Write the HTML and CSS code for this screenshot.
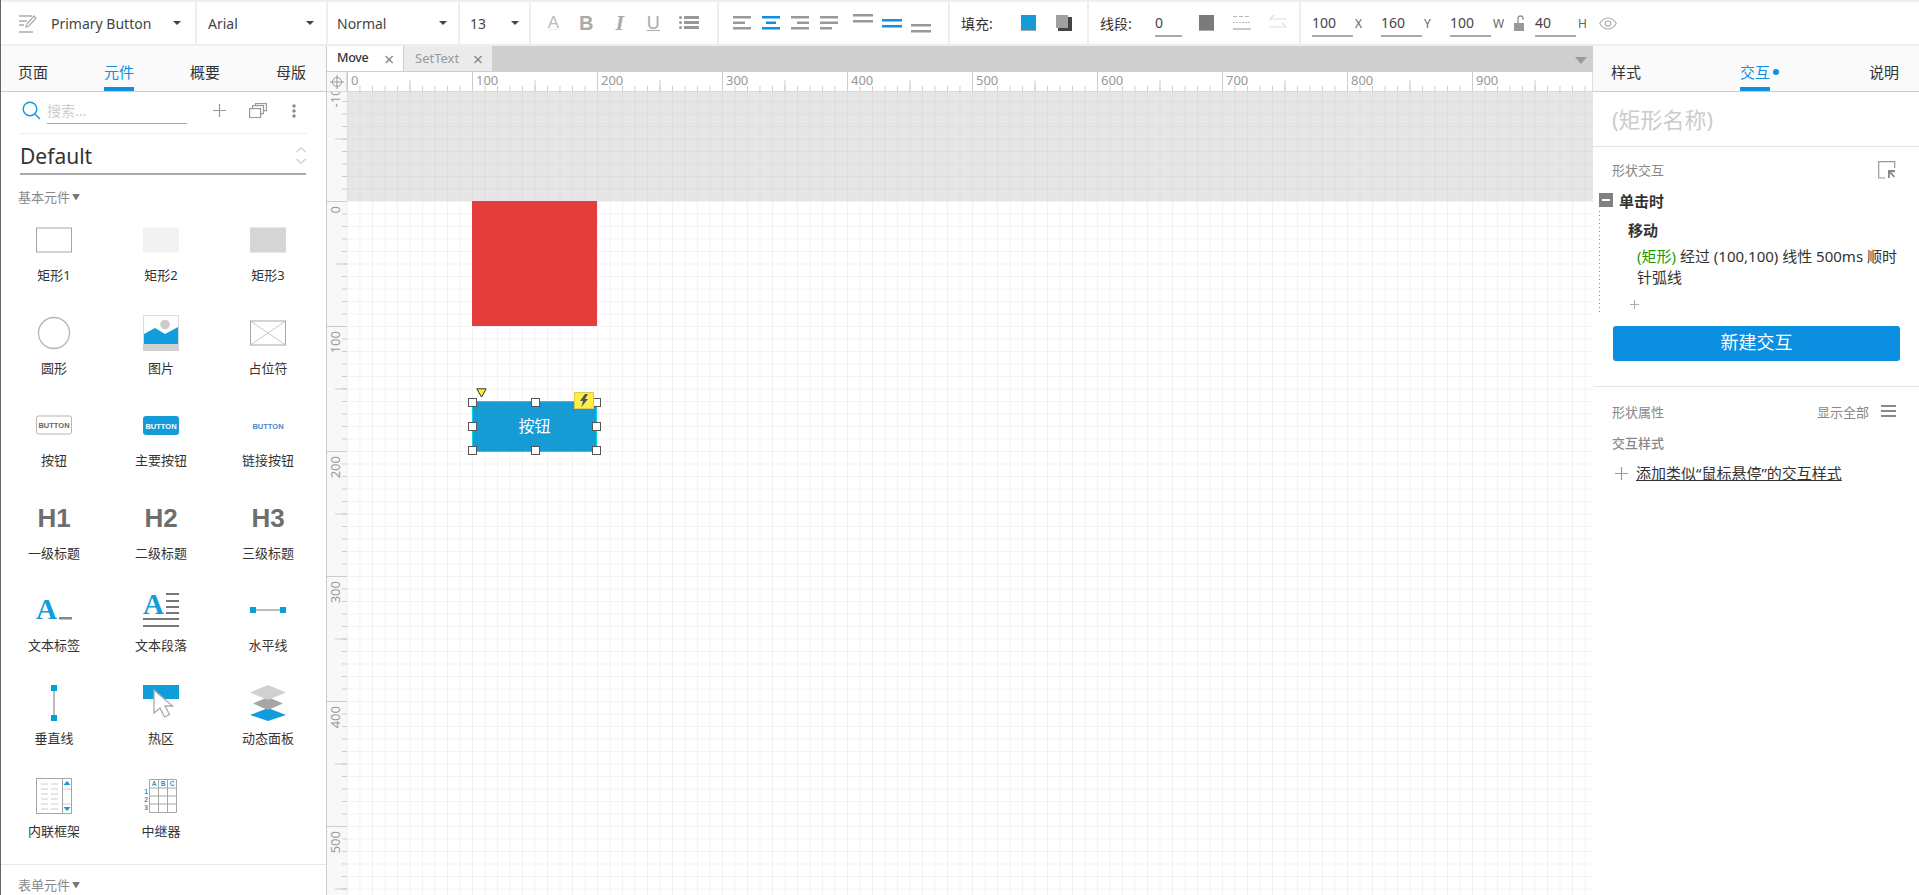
FILE: index.html
```html
<!DOCTYPE html>
<html lang="zh">
<head>
    <meta charset="UTF-8">
    <title>Axure</title>
    <link rel="stylesheet" href="styles.css">
</head>
<body>
    <!-- toolbar -->
    <div class="toolbar">
        <div class="tb-sec sec-style">
            <svg class="ic-style" width="18" height="20" viewBox="0 0 18 20" fill="none" stroke="#aaa" stroke-width="1.5"><path d="M0 3h13M0 8h8M0 12h5M0 19h14"/><path d="M7 14l1-3 7-8 2 2-7 8z" stroke-width="1.2"/></svg>
            <span class="tb-text w-style">Primary Button</span><i class="caret"></i>
        </div>
        <div class="tb-sec sec-font"><span class="tb-text w-font">Arial</span><i class="caret"></i></div>
        <div class="tb-sec sec-weight"><span class="tb-text w-weight">Normal</span><i class="caret"></i></div>
        <div class="tb-sec sec-size"><span class="tb-text w-size">13</span><i class="caret"></i></div>
        <div class="tb-sec sec-format">
            <span class="fmt fmt-a">A</span>
            <span class="fmt fmt-b">B</span>
            <span class="fmt fmt-i">I</span>
            <span class="fmt fmt-u">U</span>
            <svg width="20" height="14" viewBox="0 0 20 14" fill="#999"><rect x="0" y="0" width="3" height="3" rx="1.5"/><rect x="0" y="5" width="3" height="3" rx="1.5"/><rect x="0" y="10" width="3" height="3" rx="1.5"/><rect x="5" y="0" width="15" height="3"/><rect x="5" y="5" width="15" height="3"/><rect x="5" y="10" width="15" height="3"/></svg>
        </div>
        <div class="tb-sec sec-align">
            <svg width="18" height="14" viewBox="0 0 18 14" fill="#999"><rect width="18" height="2.5"/><rect y="5.5" width="12" height="2.5"/><rect y="11" width="18" height="2.5"/></svg>
            <svg width="18" height="14" viewBox="0 0 18 14" fill="#0f8fe0"><rect width="18" height="2.5"/><rect x="4" y="5.5" width="10" height="2.5"/><rect y="11" width="18" height="2.5"/></svg>
            <svg width="18" height="14" viewBox="0 0 18 14" fill="#999"><rect width="18" height="2.5"/><rect x="6" y="5.5" width="12" height="2.5"/><rect y="11" width="18" height="2.5"/></svg>
            <svg width="18" height="14" viewBox="0 0 18 14" fill="#999"><rect width="18" height="2.5"/><rect y="5.5" width="18" height="2.5"/><rect y="11" width="12" height="2.5"/></svg>
            <svg class="va va-top" width="20" height="9" viewBox="0 0 20 9" fill="#999"><rect width="20" height="2.5"/><rect y="6" width="20" height="2.5"/></svg>
            <svg class="va va-mid" width="20" height="9" viewBox="0 0 20 9" fill="#0f8fe0"><rect width="20" height="2.5"/><rect y="6" width="20" height="2.5"/></svg>
            <svg class="va va-bot" width="20" height="9" viewBox="0 0 20 9" fill="#999"><rect width="20" height="2.5"/><rect y="6" width="20" height="2.5"/></svg>
        </div>
        <div class="tb-sec sec-fill">
            <span class="tb-label">填充:</span>
            <span class="swatch swatch-fill"></span>
            <svg width="16" height="16" viewBox="0 0 16 16"><rect x="2" y="2" width="14" height="14" fill="#444"/><rect width="12" height="13" fill="#a0a0a0"/></svg>
        </div>
        <div class="tb-sec sec-line">
            <span class="tb-label">线段:</span>
            <span class="num num-line">0</span>
            <span class="swatch swatch-line"></span>
            <svg class="ic-dash" width="18" height="16" viewBox="0 0 18 16" stroke="#bbb" fill="none"><path d="M0 1.5h18" stroke-dasharray="4 2"/><path d="M0 7.5h18" stroke-dasharray="2 1"/><path d="M0 14h18" stroke-width="1.6"/></svg>
            <svg class="ic-arrows" width="18" height="18" viewBox="0 0 18 18" stroke="#ddd" fill="none" stroke-width="1.2"><path d="M18 5H1l4-4M0 13h17l-4-4"/></svg>
        </div>
        <div class="tb-sec sec-geom">
            <span class="num">100</span><span class="unit u-x">X</span>
            <span class="num">160</span><span class="unit u-x">Y</span>
            <span class="num">100</span><span class="unit u-w">W</span>
            <svg class="ic-lock" width="11" height="16" viewBox="0 0 11 16"><path d="M4 8V3.5a2.5 2.5 0 0 1 5 0V5" fill="none" stroke="#999" stroke-width="1.4"/><rect y="8" width="10" height="8" fill="#999"/></svg>
            <span class="num">40</span><span class="unit u-h">H</span>
            <svg class="ic-eye" width="18" height="13" viewBox="0 0 18 13" fill="none" stroke="#aaa" stroke-width="1.1"><path d="M.7 6.5C3 2.6 6 1 9 1s6 1.6 8.3 5.5C15 10.400 12 12 9 12S3 10.400.7 6.500z"/><circle cx="9" cy="6.500" r="2.800"/></svg>
        </div>
    </div>

    <div class="main">
        <!-- left panel -->
        <div class="left">
            <div class="tabs tabs-left">
                <span class="tab">页面</span>
                <span class="tab active">元件</span>
                <span class="tab">概要</span>
                <span class="tab">母版</span>
            </div>
            <div class="search-row">
                <svg class="ic-search" width="19" height="19" viewBox="0 0 19 19" fill="none" stroke="#1596e0" stroke-width="1.400"><circle cx="8" cy="8" r="6.800"/><path d="M13 13l5 5"/></svg>
                <span class="search-box">搜索...</span>
                <svg class="ic-plus" width="13" height="13" viewBox="0 0 13 13" stroke="#999" stroke-width="1.200"><path d="M6.500 0v13M0 6.500h13"/></svg>
                <svg class="ic-copy" width="18" height="15" viewBox="0 0 18 15" fill="#fff" stroke="#999" stroke-width="1.200"><rect x="6.500" y=".6" width="11" height="7"/><rect x="3.500" y="2.600" width="11" height="8"/><rect x=".6" y="5.600" width="11" height="9"/></svg>
                <svg class="ic-dots" width="4" height="14" viewBox="0 0 4 14" fill="#888"><circle cx="2" cy="2" r="1.700"/><circle cx="2" cy="7" r="1.700"/><circle cx="2" cy="12" r="1.700"/></svg>
            </div>
            <div class="lib-row">
                <span class="lib-name">Default</span>
                <svg width="10" height="17" viewBox="0 0 10 17" fill="none" stroke="#ccc" stroke-width="1.100"><path d="M.5 5L5 .8 9.500 5M.5 12L5 16.200 9.500 12"/></svg>
            </div>
            <div class="group-title">基本元件<span class="tri">▼</span></div>
            <div class="widgets">
                <div class="widget"><svg width="36" height="36" viewBox="0 0 36 36"><rect x=".5" y="6" width="35" height="24" fill="#fff" stroke="#a6a6a6"/></svg><span>矩形1</span></div>
                <div class="widget"><svg width="36" height="36" viewBox="0 0 36 36"><rect y="5.500" width="36" height="25" fill="#f2f2f2"/></svg><span>矩形2</span></div>
                <div class="widget"><svg width="36" height="36" viewBox="0 0 36 36"><rect y="5.500" width="36" height="25" fill="#d6d6d6"/></svg><span>矩形3</span></div>

                <div class="widget"><svg width="36" height="36" viewBox="0 0 36 36"><circle cx="18" cy="18" r="15.500" fill="#fff" stroke="#b5b5b5" stroke-width="1.300"/></svg><span>圆形</span></div>
                <div class="widget"><svg width="36" height="36" viewBox="0 0 36 36"><rect x=".5" y=".5" width="35" height="35" fill="#fff" stroke="#ddd"/><circle cx="22" cy="9.500" r="4.800" fill="#ccc"/><path d="M1 19l11-6 10 6 13-7v17H1z" fill="#0f9ddb"/><rect x="0" y="29" width="36" height="7" fill="#d0d0d0"/></svg><span>图片</span></div>
                <div class="widget"><svg width="36" height="36" viewBox="0 0 36 36" fill="none" stroke="#b0b0b0"><rect x=".5" y="6" width="35" height="24" fill="#fff" stroke="#a6a6a6"/><path d="M1 6.500l34 23M35 6.500L1 29.500" stroke="#c8c8c8"/></svg><span>占位符</span></div>

                <div class="widget"><svg width="36" height="36" viewBox="0 0 36 36"><rect x=".5" y="9" width="35" height="18" rx="2" fill="#fff" stroke="#b5b5b5"/><text class="btn-ic" x="18" y="21" fill="#666">BUTTON</text></svg><span>按钮</span></div>
                <div class="widget"><svg width="36" height="36" viewBox="0 0 36 36"><rect y="9" width="36" height="19" rx="3" fill="#169bd9"/><text class="btn-ic" x="18" y="22" fill="#fff">BUTTON</text></svg><span>主要按钮</span></div>
                <div class="widget"><svg width="36" height="36" viewBox="0 0 36 36"><text class="btn-ic" x="18" y="21.500" fill="#4a86c8">BUTTON</text></svg><span>链接按钮</span></div>

                <div class="widget"><div class="hx">H1</div><span>一级标题</span></div>
                <div class="widget"><div class="hx">H2</div><span>二级标题</span></div>
                <div class="widget"><div class="hx">H3</div><span>三级标题</span></div>

                <div class="widget"><svg width="36" height="36" viewBox="0 0 36 36"><text class="a-ic" x="0" y="27" fill="#0f9ddb">A</text><rect x="23" y="25" width="13" height="2.500" fill="#888"/></svg><span>文本标签</span></div>
                <div class="widget"><svg width="36" height="36" viewBox="0 0 36 36" fill="#777"><text class="a-ic" x="0" y="22" fill="#0f9ddb">A</text><rect x="23" y="1" width="13" height="2"/><rect x="23" y="8" width="13" height="2"/><rect x="23" y="14" width="13" height="2"/><rect x="23" y="20" width="13" height="2"/><rect y="26" width="36" height="2"/><rect y="33" width="36" height="2"/></svg><span>文本段落</span></div>
                <div class="widget"><svg width="36" height="36" viewBox="0 0 36 36"><rect x="3" y="17" width="30" height="2" fill="#bbb"/><rect y="15" width="6" height="6" fill="#00a0e0"/><rect x="30" y="15" width="6" height="6" fill="#00a0e0"/></svg><span>水平线</span></div>

                <div class="widget"><svg width="36" height="36" viewBox="0 0 36 36"><rect x="17" y="3" width="2" height="30" fill="#bbb"/><rect x="15" width="6" height="6" fill="#00a0e0"/><rect x="15" y="30" width="6" height="6" fill="#00a0e0"/></svg><span>垂直线</span></div>
                <div class="widget"><svg width="36" height="36" viewBox="0 0 36 36"><rect width="36" height="14" fill="#0f9ddb"/><path d="M11 5v23l6-5 4.500 9 5-2.500-4.500-8.500h7.500z" fill="#fff" stroke="#aaa" stroke-width="1.300"/></svg><span>热区</span></div>
                <div class="widget"><svg width="36" height="36" viewBox="0 0 36 36"><path d="M18 23l18 7-18 6-18-6z" fill="#0f9ddb"/><path d="M18 12l15 6.500-15 6.500-15-6.500z" fill="#a6a6a6"/><path d="M18 0l18 7.500-18 7.500-18-7.500z" fill="#d0d0d0"/></svg><span>动态面板</span></div>

                <div class="widget"><svg width="36" height="36" viewBox="0 0 36 36" fill="none"><rect x=".5" y=".5" width="35" height="35" fill="#fff" stroke="#a6a6a6"/><path d="M26.500 1v34" stroke="#a6a6a6"/><path d="M27 11h8M27 26h8" stroke="#ccc"/><path d="M31 3l3.500 4h-7z" fill="#0f9ddb"/><path d="M31 33l3.500-4h-7z" fill="#0f9ddb"/><path d="M5 6h7M15 6h7M5 11h7M15 11h7M5 16h7M15 16h7M5 21h7M15 21h7M5 26h7M15 26h7M5 31h7M15 31h7" stroke="#ccc"/></svg><span>内联框架</span></div>
                <div class="widget"><svg width="36" height="36" viewBox="0 0 36 36" fill="none"><path d="M6.500 1.500h27v33h-27zM6.500 10h27M6.500 18h27M6.500 26h27M15.500 1.500v33M24.500 1.500v33" stroke="#a6a6a6"/><text class="rep-ic" x="11" y="8" fill="#0f9ddb">A</text><text class="rep-ic" x="20" y="8" fill="#0f9ddb">B</text><text class="rep-ic" x="29" y="8" fill="#0f9ddb">C</text><text class="rep-ic" x="3" y="16" fill="#0f9ddb">1</text><text class="rep-ic" x="3" y="24" fill="#0f9ddb">2</text><text class="rep-ic" x="3" y="32" fill="#0f9ddb">3</text></svg><span>中继器</span></div>
            </div>
            <div class="group-title group-form">表单元件<span class="tri">▼</span></div>
        </div>

        <!-- center -->
        <div class="center">
            <div class="page-tabs">
                <div class="page-tab current">Move<span class="x">×</span></div>
                <div class="page-tab">SetText<span class="x">×</span></div>
                <span class="tabs-menu"></span>
            </div>
            <div class="ruler-top">
                <div class="corner">
                    <svg width="14" height="14" viewBox="0 0 14 14" fill="none" stroke="#999"><circle cx="7" cy="7" r="4.500"/><path d="M7 0v14M0 7h14"/></svg>
                </div>
                <div class="hruler">
                    <span>0</span><span>100</span><span>200</span><span>300</span><span>400</span><span>500</span><span>600</span><span>700</span><span>800</span><span>900</span><span></span>
                </div>
            </div>
            <div class="work">
                <div class="vruler">
                    <div class="vcell"><span>-100</span></div>
                    <div class="vcell"><span>0</span></div>
                    <div class="vcell"><span>100</span></div>
                    <div class="vcell"><span>200</span></div>
                    <div class="vcell"><span>300</span></div>
                    <div class="vcell"><span>400</span></div>
                    <div class="vcell"><span>500</span></div>
                    <div class="vcell"><span></span></div>
                </div>
                <div class="canvas">
                    <div class="band"></div>
                    <div class="shape-red"></div>
                    <div class="shape-btn">按钮</div>
                    <i class="handle h-tl"></i><i class="handle h-tc"></i><i class="handle h-tr"></i>
                    <i class="handle h-ml"></i><i class="handle h-mr"></i>
                    <i class="handle h-bl"></i><i class="handle h-bc"></i><i class="handle h-br"></i>
                    <svg class="marker" width="11" height="10" viewBox="0 0 11 10"><path d="M.8.8h9.400L5.500 9z" fill="#ffe93b" stroke="#333"/></svg>
                    <div class="bolt"><svg width="9" height="13" viewBox="0 0 9 13"><path d="M5 0L0 7h3l-1.500 6L8 5H5l3-5z" fill="#555"/></svg></div>
                </div>
            </div>
        </div>

        <!-- right panel -->
        <div class="right">
            <div class="tabs tabs-right">
                <span class="tab">样式</span>
                <span class="tab active dot">交互</span>
                <span class="tab">说明</span>
            </div>
            <div class="shape-name">(矩形名称)</div>
            <div class="interactions">
                <div class="sec-head">
                    <span>形状交互</span>
                    <svg width="18" height="18" viewBox="0 0 18 18" fill="none"><path d="M7 17H.7V.7h16V7" stroke="#999" stroke-width="1.200"/><path d="M10 9v8h1.800v-4.500l4 4 1.200-1.200-4-4H17V9z" fill="#888"/></svg>
                </div>
                <div class="event"><span class="minus"></span>单击时</div>
                <div class="tree">
                    <div class="action">移动</div>
                    <div class="desc"><span class="green">(矩形)</span> 经过 (100,100) 线性 500ms 顺时针弧线</div>
                    <svg class="tree-plus" width="9" height="9" viewBox="0 0 9 9" stroke="#aaa"><path d="M4.500 0v9M0 4.500h9"/></svg>
                </div>
                <div class="new-btn">新建交互</div>
            </div>
            <div class="props">
                <div class="sec-head head-props">
                    <span>形状属性</span>
                    <span class="show-all">显示全部</span>
                    <svg width="15" height="12" viewBox="0 0 15 12" fill="#888"><rect width="15" height="2"/><rect y="5" width="15" height="2"/><rect y="10" width="15" height="2"/></svg>
                </div>
                <div class="sub-title">交互样式</div>
                <div class="add-style">
                    <svg width="13" height="13" viewBox="0 0 13 13" stroke="#999" stroke-width="1.200"><path d="M6.500 0v13M0 6.500h13"/></svg>
                    <span class="link">添加类似“鼠标悬停”的交互样式</span>
                </div>
            </div>
        </div>
    </div>
</body>
</html>
```

FILE: styles.css
```css
*{
    box-sizing: border-box;
}
html,body{
    margin: 0;
    height: 895px;
    overflow: hidden;
}
body{
    font-family: "Noto Sans", "Noto Sans CJK SC", sans-serif;
    font-size: 13px;
    color: #333;
    background: #fff;
    border-left: 1px solid #666;
}

/* toolbar */
.toolbar{
    display: flex;
    height: 46px;
    border-top: 2px solid #eee;
    border-bottom: 2px solid #eee;
}
.tb-sec{
    display: flex;
    align-items: center;
    height: 42px;
    border-right: 2px solid #eee;
}
.sec-style{ width: 196px; padding-left: 18px; }
.sec-font{ width: 131px; padding-left: 11px; }
.sec-weight{ width: 132px; padding-left: 9px; }
.sec-size{ width: 71px; padding-left: 10px; }
.sec-format{ width: 188px; padding-left: 16px; }
.sec-align{ width: 231px; padding-left: 14px; gap: 11px; }
.sec-fill{ width: 139px; padding-left: 11px; }
.sec-line{ width: 212px; padding-left: 11px; }
.sec-geom{ border-right: 0; padding-left: 11px; }

.tb-text{
    font-size: 14px;
    color: #444;
}
.w-style{ width: 122px; margin-left: 14px; }
.w-font{ width: 98px; }
.w-weight{ width: 102px; }
.w-size{ width: 41px; }
.caret{
    width: 0;
    height: 0;
    border-left: 4px solid transparent;
    border-right: 4px solid transparent;
    border-top: 4px solid #444;
}
.fmt{
    width: 34.500px;
    font-family: "Liberation Sans", sans-serif;
    font-size: 17px;
    color: #aaa;
    text-align: center;
    margin-left: -1px;
}
.fmt-a{
    font-size: 17px;
    font-weight: normal;
    color: #bbb;
    text-decoration: underline;
    text-decoration-color: #eee;
    margin-left: -1px;
    width: 15px;
    margin-right: 9px;
}
.fmt-b{ font-weight: bold; font-size: 20px; }
.fmt-i{ font-style: italic; font-weight: bold; font-family: "Liberation Serif", serif; font-size: 22px; }
.fmt-u{ text-decoration: underline; font-size: 18px; margin-right: 8px; }
.va{ align-self: center; }
.va-top{ margin: -9px 0 0 4px; }
.va-mid{ margin: 1px 0 0 -2px; }
.va-bot{ margin: 11px 0 0 -2px; }
.tb-label{
    font-size: 14px;
    color: #333;
    width: 36px;
}
.swatch{
    width: 15px;
    height: 16px;
    margin: 0 20px 0 24px;
    border-bottom: 1px solid #aaa;
}
.swatch-fill{ background: #169bd9; }
.swatch-line{ background: #7a7a7a; margin: 0 19px 0 17px; }
.ic-arrows{ margin-left: 18px; }
.num{
    width: 41px;
    height: 26px;
    line-height: 24px;
    font-size: 14px;
    color: #444;
    border-bottom: 2px solid #aaa;
    padding-left: 0;
    margin-top: 1px;
}
.num-line{ width: 27px; margin-left: 19px; }
.unit{
    font-size: 12px;
    color: #666;
    margin-left: 2px;
}
.u-x{ width: 26px; }
.u-w{ width: 21px; }
.u-h{ width: 21px; }
.ic-lock{ margin-right: 10px; }
.ic-eye{ margin-left: 0; }

.main{
    display: flex;
    height: 849px;
}

/* left panel */
.left{
    width: 326px;
    flex: none;
    border-right: 1px solid #ccc;
    overflow: hidden;
}
.tabs{
    display: flex;
    height: 46px;
    background: #fafafa;
    border-bottom: 1px solid #ccc;
}
.tabs-left{
    padding-left: 17px;
    gap: 56px;
}
.tab{
    width: 30px;
    height: 45px;
    padding-top: 16px;
    line-height: 20px;
    font-size: 15px;
    white-space: nowrap;
}
.tab.active{
    color: #0f8fe0;
    border-bottom: 4px solid #0f8fe0;
}
.search-row{
    display: flex;
    align-items: center;
    height: 42px;
    margin: 0 19px;
    border-bottom: 1px solid #eee;
}
.ic-search{ margin: -4px 0 0 2px; flex: none; }
.search-box{
    width: 140px;
    height: 22px;
    margin: 0 0 0 6px;
    border-bottom: 1px solid #aaa;
    color: #ccc;
    font-size: 14px;
    line-height: 18px;
}
.ic-plus{ margin: -4px 0 0 26px; }
.ic-copy{ margin: -4px 0 0 23px; }
.ic-dots{ margin: -4px 0 0 25px; }
.lib-row{
    display: flex;
    align-items: center;
    justify-content: space-between;
    width: 286px;
    height: 41px;
    margin-left: 19px;
    padding-top: 4px;
    border-bottom: 2px solid #aaa;
}
.lib-name{
    font-size: 21px;
    color: #333;
    line-height: 28px;
}
.group-title{
    margin: 13px 0 0 17px;
    font-size: 13px;
    line-height: 18px;
    color: #888;
}
.tri{
    font-size: 8px;
    vertical-align: 2px;
    margin-left: 2px;
    color: #777;
}
.widgets{
    display: grid;
    grid-template-columns: 106px 108px 106px;
    grid-auto-rows: 92.600px;
    height: 643px;
    margin-top: 16px;
    border-bottom: 1px solid #e8e8e8;
}
.widget{
    display: flex;
    flex-direction: column;
    align-items: center;
}
.widget svg,.hx{
    width: 36px;
    height: 36px;
    flex: none;
    overflow: visible;
}
.widget span{
    margin-top: 7px;
    line-height: 20px;
    font-size: 13px;
    white-space: nowrap;
}
.hx{
    font-family: "Liberation Sans", sans-serif;
    font-size: 26px;
    font-weight: bold;
    color: #6e6e6e;
    line-height: 36px;
    text-align: center;
}
.btn-ic{
    font-family: "Liberation Sans", sans-serif;
    font-size: 7.500px;
    font-weight: bold;
    text-anchor: middle;
}
.a-ic{
    font-family: "Liberation Serif", serif;
    font-size: 29px;
    font-weight: bold;
}
.rep-ic{
    font-family: "Liberation Sans", sans-serif;
    font-size: 6.500px;
    font-weight: bold;
    text-anchor: middle;
}
.group-form{
    margin-top: 11px;
}

/* center */
.center{
    width: 1266px;
    flex: none;
    overflow: hidden;
}
.page-tabs{
    position: relative;
    display: flex;
    height: 26px;
    background: #cfcfcf;
}
.page-tab{
    display: flex;
    justify-content: space-between;
    width: 88px;
    height: 25px;
    padding: 0 9px 0 11px;
    background: #ebebeb;
    color: #999;
    font-size: 13px;
    line-height: 24px;
    margin-left: 1px;
}
.page-tab.current{
    width: 76px;
    margin-left: 0;
    padding-left: 10px;
    background: #fff;
    color: #333;
    font-weight: 500;
    font-size: 12.500px;
    letter-spacing: -0.3px;
}
.x{
    font-size: 18px;
    font-weight: normal;
    color: #888;
    line-height: 26px;
}
.tabs-menu{
    position: absolute;
    right: 6px;
    top: 11px;
    border-left: 6px solid transparent;
    border-right: 6px solid transparent;
    border-top: 7px solid #999;
}
.ruler-top{
    display: flex;
    height: 20px;
    border-bottom: 1px solid #d8d8d8;
}
.corner{
    display: flex;
    align-items: center;
    justify-content: center;
    width: 20px;
    flex: none;
    background: #f8f8f8;
    border-right: 1px solid #ddd;
}
.hruler{
    display: flex;
    flex: 1;
    overflow: hidden;
    background:
        linear-gradient(to right, #ccc 1px, transparent 1px) 0 0 / 125px 100% repeat-x,
        linear-gradient(to right, #ccc 1px, transparent 1px) 0 100% / 62.500px 11px repeat-x,
        linear-gradient(to right, #ccc 1px, transparent 1px) 0 100% / 12.500px 5px repeat-x,
        #fff;
}
.hruler span{
    width: 125px;
    flex: none;
    padding-left: 4px;
    font-size: 13px;
    line-height: 17px;
    color: #999;
}
.work{
    display: flex;
    height: 803px;
}
.vruler{
    width: 20px;
    flex: none;
    overflow: hidden;
    background: #f8f8f8;
}
.vcell{
    height: 125px;
    padding-top: 5px;
    background:
        linear-gradient(#ccc 1px, transparent 1px) 0 0 / 100% 125px no-repeat,
        linear-gradient(#ccc 1px, transparent 1px) 100% 0 / 12px 62.500px repeat-y,
        linear-gradient(#ccc 1px, transparent 1px) 100% 0 / 5px 12.500px repeat-y;
}
.vcell:first-child{
    margin-top: -16px;
}
.vcell span{
    display: block;
    writing-mode: vertical-rl;
    transform: rotate(180deg);
    width: 17px;
    font-size: 13px;
    line-height: 17px;
    color: #999;
    text-align: left;
}
.canvas{
    position: relative;
    flex: 1;
    overflow: hidden;
    background:
        linear-gradient(to right, #f2f2f2 1px, transparent 1px) 0 0 / 12.500px 12.500px,
        linear-gradient(#f2f2f2 1px, transparent 1px) 0 9px / 12.500px 12.500px,
        #fff;
}
.band{
    height: 109px;
    background:
        linear-gradient(to right, #dedede 1px, transparent 1px) 0 0 / 12.500px 12.500px,
        linear-gradient(#dedede 1px, transparent 1px) 0 9px / 12.500px 12.500px,
        #e6e6e6;
}
.shape-red{
    position: absolute;
    left: 125px;
    top: 109px;
    width: 125px;
    height: 125px;
    background: #e33e3c;
}
.shape-btn{
    position: absolute;
    left: 125px;
    top: 309px;
    width: 125px;
    height: 51px;
    background: #169bd5;
    border: 1px solid #00d9e0;
    color: #fff;
    font-size: 16px;
    line-height: 48px;
    text-align: center;
}
.handle{
    position: absolute;
    width: 9px;
    height: 9px;
    background: #fff;
    border: 1px solid #555;
    margin: -4px 0 0 -4px;
}
.h-tl{ left: 125px; top: 310px; }
.h-tc{ left: 188px; top: 310px; }
.h-tr{ left: 249px; top: 310px; }
.h-ml{ left: 125px; top: 334px; }
.h-mr{ left: 249px; top: 334px; }
.h-bl{ left: 125px; top: 358px; }
.h-bc{ left: 188px; top: 358px; }
.h-br{ left: 249px; top: 358px; }
.marker{
    position: absolute;
    left: 129px;
    top: 296px;
}
.bolt{
    position: absolute;
    left: 227px;
    top: 300px;
    display: flex;
    align-items: center;
    justify-content: center;
    width: 20px;
    height: 17px;
    background: #ffee44;
    border: 1px solid #d8cc55;
}

/* right panel */
.right{
    width: 327px;
    flex: none;
    border-left: 1px solid #ddd;
    margin-left: -1px;
}
.tabs-right{
    padding-left: 18px;
    gap: 99px;
}
.dot{
    position: relative;
}
.dot::after{
    content: "";
    position: absolute;
    left: 33px;
    top: 23px;
    width: 6px;
    height: 6px;
    border-radius: 50%;
    background: #0f8fe0;
}
.shape-name{
    height: 55px;
    padding: 10px 0 0 19px;
    font-size: 22px;
    line-height: 34px;
    color: #ccc;
    border-bottom: 1px solid #e5e5e5;
}
.interactions{
    height: 240px;
    padding: 0 19px 0 20px;
    border-bottom: 1px solid #e5e5e5;
}
.sec-head{
    display: flex;
    align-items: center;
    height: 43px;
    margin-left: -1px;
    padding-right: 4px;
    padding-top: 2px;
    justify-content: space-between;
    color: #888;
    font-size: 13px;
}
.event{
    display: flex;
    align-items: center;
    height: 20px;
    margin-left: -14px;
    font-size: 15px;
    font-weight: bold;
}
.minus{
    position: relative;
    width: 14px;
    height: 14px;
    margin-right: 6px;
    background: #808080;
}
.minus::after{
    content: "";
    position: absolute;
    left: 3px;
    top: 6px;
    width: 8px;
    height: 2px;
    background: #fff;
}
.tree{
    height: 102px;
    margin-left: -14px;
    padding: 10px 0 0 29px;
    background: linear-gradient(#888 1px, transparent 1px) 0 1px / 1px 4px repeat-y;
}
.action{
    font-size: 15px;
    font-weight: bold;
    line-height: 20px;
}
.desc{
    width: 265px;
    margin: 6px 0 0 9px;
    font-size: 15px;
    line-height: 21px;
}
.green{
    color: #1d9a00;
}
.tree-plus{
    display: block;
    margin: 12px 0 0 2px;
}
.new-btn{
    height: 35px;
    margin-top: 14px;
    border-radius: 3px;
    background: #0c8fe0;
    color: #fff;
    font-size: 18px;
    line-height: 33px;
    text-align: center;
}
.props{
    padding: 0 23px 0 19px;
}
.head-props{
    height: 42px;
    margin-left: 0;
    padding: 6px 0 0;
    justify-content: flex-start;
}
.show-all{
    margin-left: auto;
    margin-right: 12px;
}
.sub-title{
    margin-top: 4px;
    color: #888;
    font-size: 13px;
    font-weight: 500;
    line-height: 20px;
}
.add-style{
    display: flex;
    align-items: center;
    gap: 8px;
    margin: 10px 0 0 3px;
}
.link{
    font-size: 15px;
    line-height: 20px;
    text-decoration: underline;
    white-space: nowrap;
}
```
